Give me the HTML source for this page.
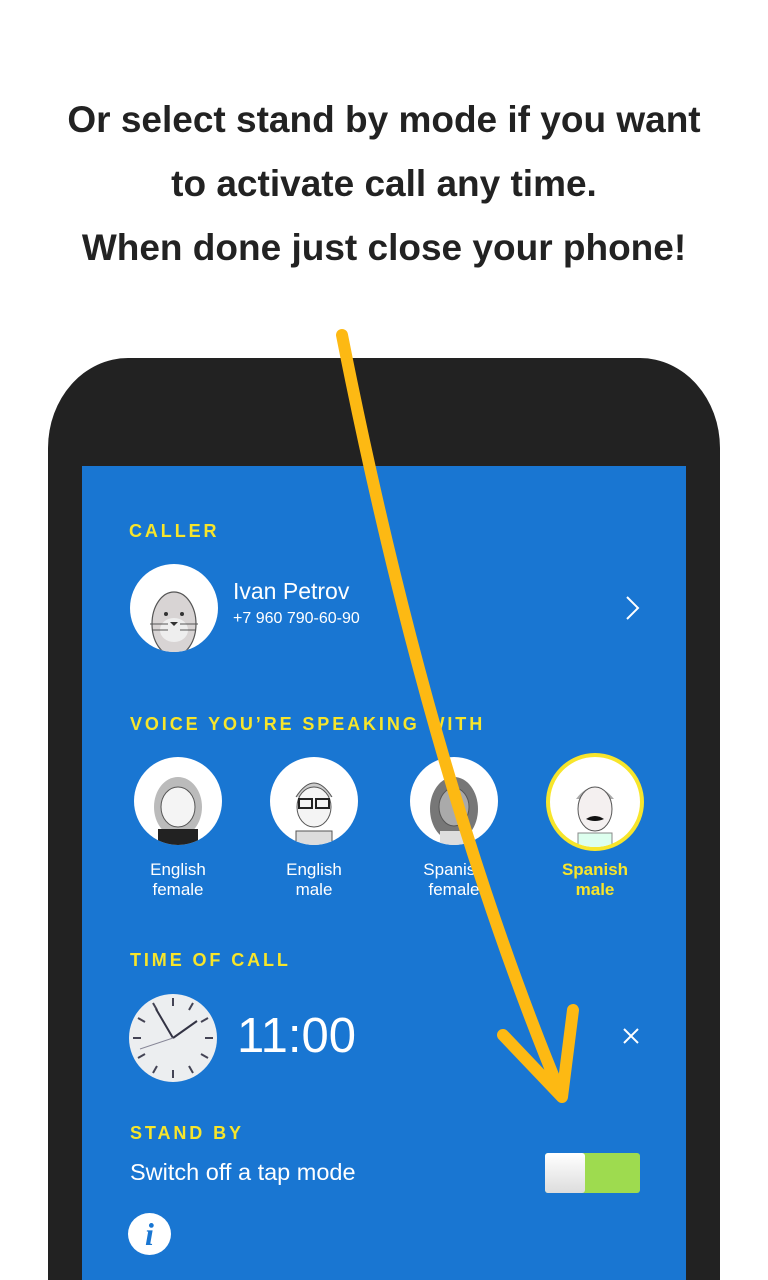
<!DOCTYPE html>
<html><head><style>
html,body{margin:0;width:768px;height:1280px;overflow:hidden}
body{background:#fff;position:relative;font-family:"Liberation Sans",sans-serif}
.h{position:absolute;left:0;width:768px;text-align:center;font-weight:bold;font-size:37px;color:#222;line-height:64px;top:88px}
.phone{position:absolute;left:48px;top:358px;width:672px;height:922px;background:#222;border-radius:80px 80px 0 0/90px 90px 0 0}
.scr{position:absolute;left:82px;top:466px;width:604px;height:814px;background:#1976d2}
.lbl{position:absolute;color:#f7e52b;font-weight:bold;font-size:18px;letter-spacing:2.9px}
.w{position:absolute;color:#fff}
.av{position:absolute;width:88px;height:88px;border-radius:50%;background:#fff;overflow:hidden}
.cap{position:absolute;width:110px;text-align:center;color:#fff;font-size:17px;line-height:20px}
</style></head><body>
<div class="h">Or select stand by mode if you want<br>to activate call any time.<br>When done just close your phone!</div>
<div class="phone"></div>
<div class="scr"></div>
<div class="lbl" style="left:129px;top:521px">CALLER</div>
<div class="av" style="left:130px;top:564px">
<svg width="88" height="88"><ellipse cx="44" cy="60" rx="22" ry="32" fill="#d8d4d4" stroke="#555" stroke-width="1.2"/><ellipse cx="44" cy="66" rx="14" ry="12" fill="#eee"/><circle cx="36" cy="50" r="2" fill="#333"/><circle cx="52" cy="50" r="2" fill="#333"/><path d="M40 58h8l-4 4z" fill="#333"/><path d="M20 60h18M22 66h16M50 60h18M50 66h16" stroke="#555"/></svg></div>
<div class="w" style="left:233px;top:578px;font-size:23px">Ivan Petrov</div>
<div class="w" style="left:233px;top:610px;font-size:16px">+7 960 790-60-90</div>
<svg style="position:absolute;left:622px;top:594px" width="22" height="28"><path d="M5 3l11 11-11 11" stroke="#fff" stroke-width="2" fill="none"/></svg>
<div class="lbl" style="left:130px;top:714px">VOICE YOU’RE SPEAKING WITH</div>
<div class="av" style="left:134px;top:757px"><svg width="88" height="88"><ellipse cx="44" cy="50" rx="24" ry="30" fill="#bbb"/><ellipse cx="44" cy="50" rx="17" ry="20" fill="#f4f4f4" stroke="#555"/><rect x="24" y="72" width="40" height="20" fill="#222"/></svg></div>
<div class="av" style="left:270px;top:757px"><svg width="88" height="88"><path d="M26 40q18-28 36 0" fill="#ccc" stroke="#555"/><ellipse cx="44" cy="50" rx="17" ry="20" fill="#f4f4f4" stroke="#555"/><rect x="29" y="42" width="13" height="9" fill="none" stroke="#222" stroke-width="2"/><rect x="46" y="42" width="13" height="9" fill="none" stroke="#222" stroke-width="2"/><rect x="26" y="74" width="36" height="18" fill="#ddd" stroke="#555"/></svg></div>
<div class="av" style="left:410px;top:757px"><svg width="88" height="88"><ellipse cx="44" cy="52" rx="24" ry="32" fill="#777"/><ellipse cx="44" cy="50" rx="15" ry="19" fill="#aaa" stroke="#555"/><rect x="30" y="74" width="28" height="18" fill="#ddd"/></svg></div>
<div class="av" style="left:546px;top:753px;width:90px;height:90px;border:4px solid #f7e52b"><svg width="90" height="90"><path d="M26 42q18-24 38 0" fill="#aaa"/><ellipse cx="45" cy="52" rx="17" ry="22" fill="#f4f0f0" stroke="#555"/><path d="M36 62q9-6 18 0q-9 4-18 0" fill="#111"/><rect x="28" y="76" width="34" height="18" fill="#dfe" stroke="#888"/></svg></div>
<div class="cap" style="left:123px;top:860px">English<br>female</div>
<div class="cap" style="left:259px;top:860px">English<br>male</div>
<div class="cap" style="left:399px;top:860px">Spanish<br>female</div>
<div class="cap" style="left:540px;top:860px;color:#f7e52b;font-weight:bold">Spanish<br>male</div>
<div class="lbl" style="left:130px;top:950px">TIME OF CALL</div>
<svg style="position:absolute;left:128px;top:993px" width="90" height="90"><circle cx="45" cy="45" r="44" fill="#eceef0"/><g stroke="#445" stroke-width="2"><path d="M45 5v8M45 77v8M5 45h8M77 45h8M65 10l-4 7M25 80l4-7M80 25l-7 4M10 65l7-4M25 10l4 7M65 80l-4-7M10 25l7 4M80 65l-7-4"/></g><path d="M45 45L28 16M45 45l24-17" stroke="#334" stroke-width="2"/><path d="M45 45L12 56" stroke="#889" stroke-width="1"/></svg>
<div class="w" style="left:237px;top:1008px;font-size:49px">11:00</div>
<svg style="position:absolute;left:622px;top:1027px" width="18" height="18"><path d="M2 2l14 14M16 2L2 16" stroke="#fff" stroke-width="2"/></svg>
<div class="lbl" style="left:130px;top:1123px">STAND BY</div>
<div class="w" style="left:130px;top:1159px;font-size:23.5px">Switch off a tap mode</div>
<div style="position:absolute;left:545px;top:1153px;width:95px;height:40px;background:#9edb4f;border-radius:3px"></div>
<div style="position:absolute;left:545px;top:1153px;width:40px;height:40px;background:linear-gradient(#fff,#ddd);border-radius:3px"></div>
<div style="position:absolute;left:128px;top:1213px;width:43px;height:42px;border-radius:50%;background:#fff;color:#1976d2;font:italic bold 32px 'Liberation Serif',serif;text-align:center;line-height:42px">i</div>
<svg style="position:absolute;left:0;top:0" width="768" height="1280"><path d="M342 335Q430 780 562 1097M503 1035L562 1097L573 1010" stroke="#fdb913" stroke-width="12" fill="none" stroke-linecap="round" stroke-linejoin="round"/></svg>
</body></html>
